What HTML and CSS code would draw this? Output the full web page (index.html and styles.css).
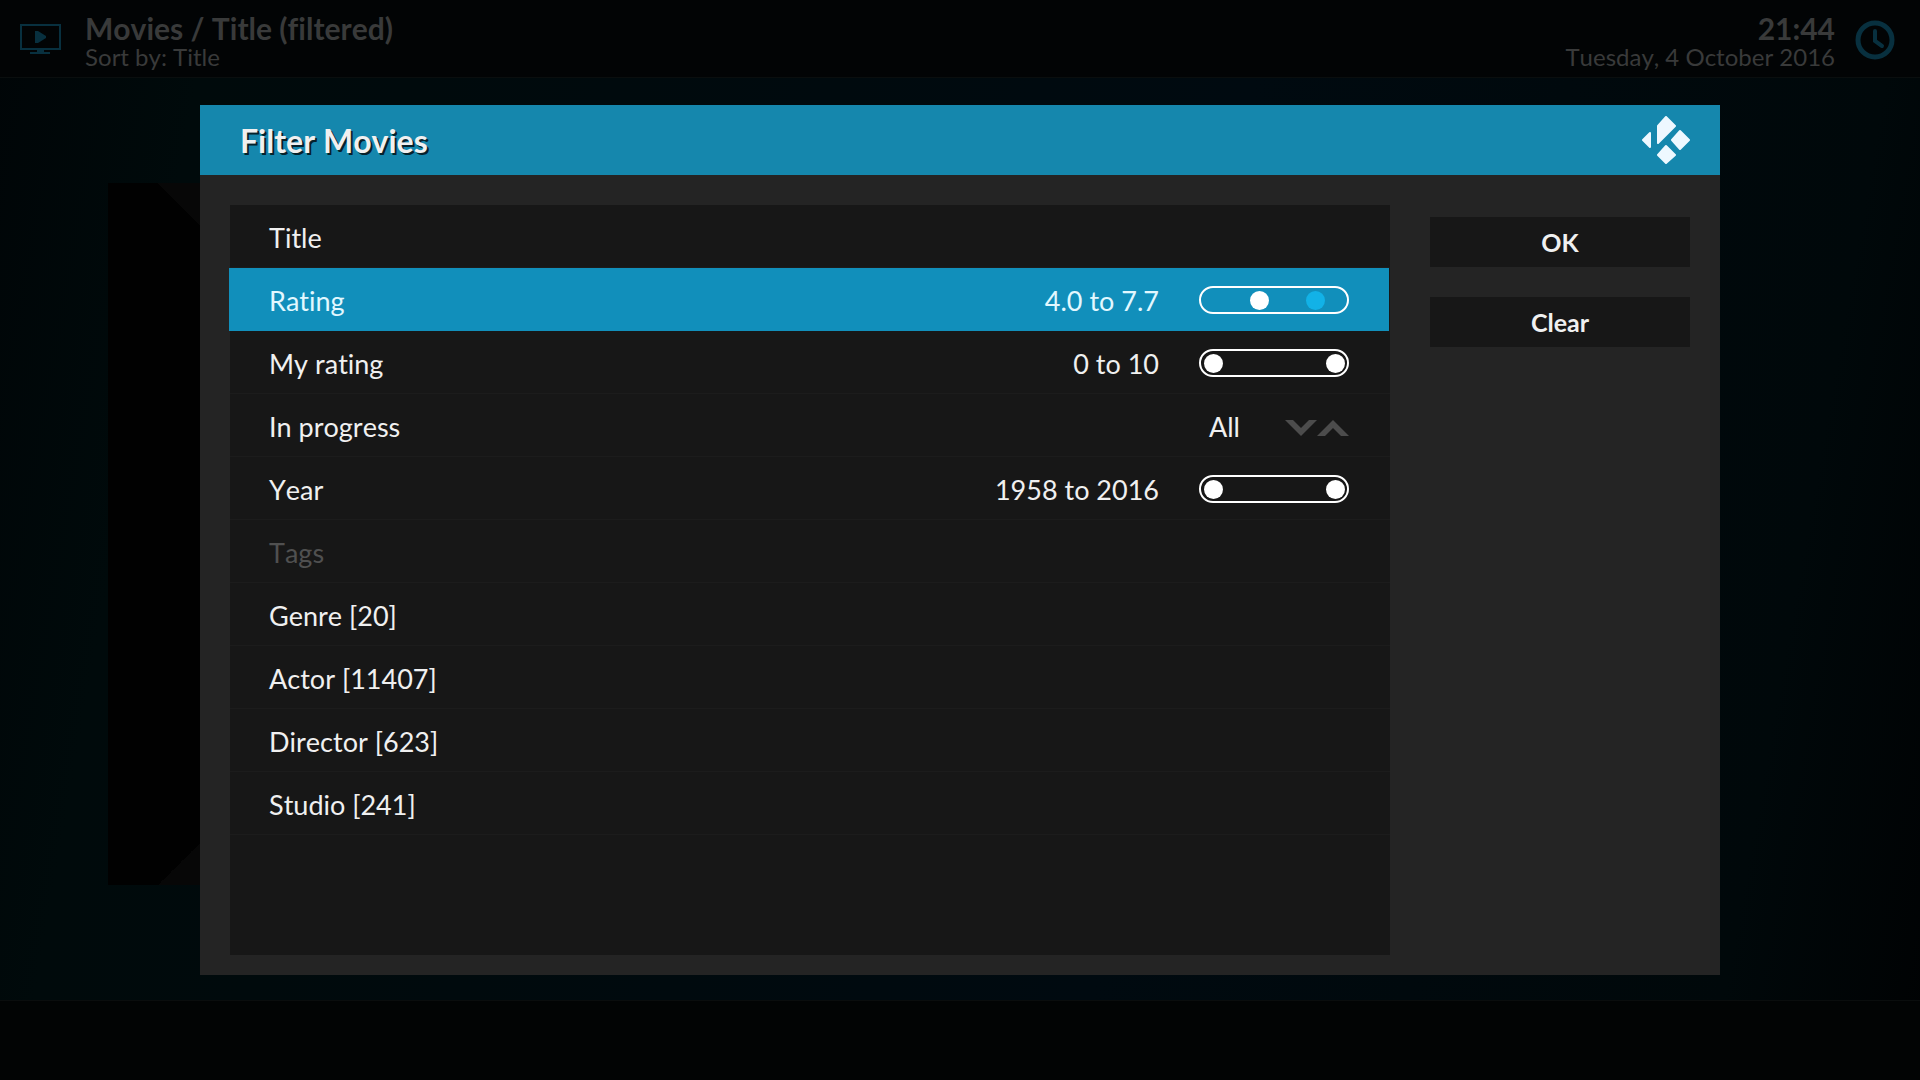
FILE: index.html
```
<!DOCTYPE html>
<html lang="en">
  <head>
    <meta charset="UTF-8" />
    <meta name="viewport" content="width=device-width, initial-scale=1.0" />
    <title>Filter Movies</title>
    <link rel="stylesheet" href="styles.css">
  </head>
  <body>
    <header class="topbar">
      <svg class="tv-icon" viewBox="0 0 42 32" aria-hidden="true">
        <rect x="1" y="1" width="39" height="24" fill="none" stroke="currentColor" stroke-width="2" />
        <path d="M15 7h3l8 5v2l-8 5h-3z" fill="currentColor" />
        <path d="M17 26h7v2h6v2H10v-2h7z" fill="currentColor" />
      </svg>
      <div class="heading">
        <h1>Movies / Title (filtered)</h1>
        <p>Sort by: Title</p>
      </div>
      <div class="heading clock">
        <time class="time">21:44</time>
        <p>Tuesday, 4 October 2016</p>
      </div>
      <svg class="clock-icon" viewBox="0 0 40 40" aria-hidden="true">
        <circle cx="20" cy="20" r="17" fill="none" stroke="currentColor" stroke-width="5" />
        <path d="M20 11v10l7 5" fill="none" stroke="currentColor" stroke-width="4" stroke-linecap="round" />
      </svg>
    </header>

    <main class="library">
      <div class="poster-panel"></div>
    </main>
    <footer class="bottombar"></footer>

    <div class="overlay">
      <section class="dialog" role="dialog" aria-labelledby="dialog-title">
        <div class="dialog-header">
          <h2 id="dialog-title">Filter Movies</h2>
          <svg class="logo" viewBox="0 0 48 48" aria-hidden="true">
            <g fill="currentColor" stroke="currentColor" stroke-width="2" stroke-linejoin="round">
              <path d="M8 17v14l-7-7z" />
              <path d="M16 10l8-9 9 9-17 17z" />
              <path d="M38 15l9 9-9 9-8-9z" />
              <path d="M24 30l9 9-9 8-8-8z" />
            </g>
          </svg>
        </div>
        <div class="dialog-body">
          <ul class="filters">
            <li class="row"><button class="filter">Title</button></li>
            <li class="row selected">
              <span class="name" id="rating">Rating</span>
              <output class="value">4.0 to 7.7</output>
              <div class="range" role="group" aria-labelledby="rating">
                <input type="range" min="1" max="9" step="0.1" value="4" aria-label="Rating from">
                <input class="active" type="range" min="1" max="9" step="0.1" value="7.7" aria-label="Rating to">
              </div>
            </li>
            <li class="row">
              <span class="name" id="my-rating">My rating</span>
              <output class="value">0 to 10</output>
              <div class="range" role="group" aria-labelledby="my-rating">
                <input type="range" min="0" max="10" value="0" aria-label="My rating from">
                <input type="range" min="0" max="10" value="10" aria-label="My rating to">
              </div>
            </li>
            <li class="row">
              <span class="name">In progress</span>
              <output class="value">All</output>
              <div class="spinner">
                <button aria-label="Next">
                  <svg viewBox="0 0 32 16"><path d="M0 0h8l8 8 8-8h8L16 16z" fill="currentColor" /></svg>
                </button>
                <button aria-label="Previous">
                  <svg viewBox="0 0 32 16"><path d="M0 16h8l8-8 8 8h8L16 0z" fill="currentColor" /></svg>
                </button>
              </div>
            </li>
            <li class="row">
              <span class="name" id="year">Year</span>
              <output class="value">1958 to 2016</output>
              <div class="range" role="group" aria-labelledby="year">
                <input type="range" min="1958" max="2016" value="1958" aria-label="Year from">
                <input type="range" min="1958" max="2016" value="2016" aria-label="Year to">
              </div>
            </li>
            <li class="row"><button class="filter" disabled>Tags</button></li>
            <li class="row"><button class="filter">Genre [20]</button></li>
            <li class="row"><button class="filter">Actor [11407]</button></li>
            <li class="row"><button class="filter">Director [623]</button></li>
            <li class="row"><button class="filter">Studio [241]</button></li>
          </ul>
          <div class="actions">
            <button class="action">OK</button>
            <button class="action">Clear</button>
          </div>
        </div>
      </section>
    </div>
  </body>
</html>
```
FILE: styles.css
```
:root {
  --accent: #118fbb;
  --accent-dim: #08303f;
  --panel: #242424;
  --inset: #171717;
  --text: #f0f0f0;
}

* {
  box-sizing: border-box;
}

body {
  margin: 0;
  min-height: 100vh;
  display: grid;
  grid-template-rows: 78px 1fr 80px;
  background: linear-gradient(100deg, #000507 0%, #000a0b 10%, #000a10 60%, #00080a 90%, #000203 100%);
  color: var(--text);
  font-family: Lato, "Open Sans", sans-serif;
  font-variant-ligatures: none;
  font-kerning: none;
}

h1, h2, p, ul {
  margin: 0;
  padding: 0;
}

button {
  border: 0;
  padding: 0;
  background: none;
  color: inherit;
  font: inherit;
  font-variant-ligatures: none;
  font-kerning: none;
}

/* dimmed window behind the dialog */
.topbar {
  display: flex;
  align-items: center;
  padding: 2px 25px 0 20px;
  background: #020405;
  border-bottom: 1px solid #0a0e0e;
  color: #393a3a;
}
.tv-icon {
  width: 42px;
  height: 32px;
  margin-right: 23px;
  color: var(--accent-dim);
}
.heading {
  font-size: 24px;
  line-height: 28px;
  padding-top: 4px;
}
.heading h1,
.time {
  display: block;
  font-size: 30px;
  font-weight: bold;
  line-height: 30px;
}
.clock {
  margin-left: auto;
  text-align: right;
}
.clock-icon {
  width: 40px;
  height: 40px;
  margin-left: 20px;
  color: var(--accent-dim);
}
.library {
  padding: 105px 200px 115px 108px;
  display: grid;
}
.poster-panel {
  background:
    linear-gradient(45deg, transparent 50%, #070707 50%) 50px 0 / 44px 44px no-repeat,
    linear-gradient(135deg, transparent 50%, #070707 50%) 50px 100% / 44px 44px no-repeat,
    #010101;
}
.bottombar {
  background: #020404;
  border-top: 1px solid #0a0d0d;
}

.overlay {
  position: absolute;
  inset: 0;
  display: flex;
  align-items: center;
  padding: 0 200px;
}
.dialog {
  flex: 1;
  background: var(--panel);
}
.dialog-header {
  display: flex;
  align-items: center;
  justify-content: space-between;
  height: 70px;
  padding: 0 30px 0 40px;
  background: #1587ad;
}
.dialog-header h2 {
  padding-top: 2px;
  font-size: 32px;
  line-height: 40px;
  text-shadow: 2px 2px 0 #06222c;
}
.logo {
  width: 48px;
  height: 48px;
  color: #eef8ff;
}
.dialog-body {
  display: flex;
  gap: 40px;
  padding: 30px 30px 20px;
}

.filters {
  flex: 1;
  min-height: 750px;
  background: var(--inset);
  list-style: none;
}
.row {
  display: flex;
  align-items: center;
  height: 63px;
  padding: 2px 41px 0 39px;
  border-bottom: 1px solid #1c1c1c;
  font-size: 27px;
  line-height: 34px;
}
.row.selected {
  margin: 0 1px 0 -1px;
  padding: 2px 40px 0;
  border-color: var(--accent);
  background: var(--accent);
  color: #e2f8ff;
}
.name,
.filter {
  flex: 1;
  padding-top: 2px;
  text-align: left;
}
.filter:disabled {
  color: #505050;
}
.value {
  margin-right: 40px;
  padding-top: 2px;
}

.range {
  display: grid;
  width: 150px;
  height: 28px;
  padding: 0 2px 0 3px;
  border: 2px solid #fff;
  border-radius: 14px;
}
/* both ends of a range share one track */
.range input {
  grid-area: 1 / 1;
  appearance: none;
  width: 100%;
  height: 24px;
  margin: 0;
  background: none;
  pointer-events: none;
}
.range input::-webkit-slider-thumb {
  appearance: none;
  width: 19px;
  height: 19px;
  border-radius: 50%;
  background: #fff;
  pointer-events: auto;
}
.range .active::-webkit-slider-thumb {
  background: #12b2e7;
}

.value:has(+ .spinner) {
  margin-right: 45px;
}
.spinner {
  display: flex;
  padding-top: 4px;
  color: #4c4c4c;
}
.spinner svg {
  display: block;
  width: 32px;
  height: 16px;
}

.actions {
  display: flex;
  flex-direction: column;
  gap: 30px;
  width: 260px;
  padding-top: 12px;
}
.action {
  height: 50px;
  background: var(--inset);
  font-size: 25px;
  font-weight: bold;
}
```
